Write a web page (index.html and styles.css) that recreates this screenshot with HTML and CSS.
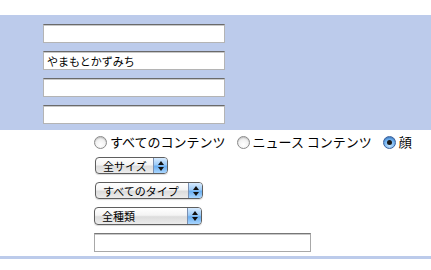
FILE: index.html
```html
<!DOCTYPE html>
<html lang="ja">
<head>
<meta charset="utf-8">
<link rel="stylesheet" href="styles.css">
</head>
<body>
<div class="band">
  <input class="field" type="text" value="">
  <input class="field" type="text" value="やまもとかずみち">
  <input class="field" type="text" value="">
  <input class="field" type="text" value="">
</div>
<div class="options">
  <div class="radios">
    <label class="radio"><span class="dot"></span><span class="rlabel">すべてのコンテンツ</span></label>
    <label class="radio"><span class="dot"></span><span class="rlabel">ニュース コンテンツ</span></label>
    <label class="radio"><span class="dot on"></span><span class="rlabel">顔</span></label>
  </div>
  <div class="popup w1"><span class="ptext">全サイズ</span><span class="parrow"><span class="up"></span><span class="down"></span></span></div>
  <div class="popup w2"><span class="ptext">すべてのタイプ</span><span class="parrow"><span class="up"></span><span class="down"></span></span></div>
  <div class="popup w3"><span class="ptext">全種類</span><span class="parrow"><span class="up"></span><span class="down"></span></span></div>
  <input class="field wide" type="text" value="">
</div>
<div class="rule"></div>
</body>
</html>
```
FILE: styles.css
```css
html, body {
  margin: 0;
  padding: 0;
  background: #ffffff;
  font-family: "Noto Sans CJK JP", "Liberation Sans", sans-serif;
  color: #000;
}
.band {
  margin-top: 15px;
  height: 115px;
  box-sizing: border-box;
  background: #bccbeb;
  padding: 9px 0 0 43px;
  display: flex;
  flex-direction: column;
  gap: 8px;
}
.field {
  display: block;
  width: 182px;
  height: 19px;
  box-sizing: border-box;
  margin: 0;
  padding: 0 0 0 3px;
  border: 1px solid #b4b4b4;
  border-top-color: #6a6a6a;
  box-shadow: inset 0 1px 0 #c8c8c8;
  background: #fff;
  font-family: "Noto Sans CJK JP", sans-serif;
  font-size: 11px;
  color: #000;
  outline: none;
}
.options {
  padding: 4px 0 0 94px;
  display: flex;
  flex-direction: column;
  align-items: flex-start;
}
.radios {
  display: flex;
  height: 16px;
  align-items: center;
  gap: 11px;
  margin-bottom: 7px;
}
.radio {
  display: flex;
  align-items: center;
  gap: 3px;
  font-size: 13px;
  line-height: 16px;
}
.dot {
  width: 11px;
  height: 11px;
  border-radius: 50%;
  border: 1px solid #8a8a8a;
  background: radial-gradient(circle at 50% 70%, #ffffff 0%, #f2f2f2 50%, #d6d6d6 100%);
  box-shadow: inset 0 1px 1px rgba(0,0,0,0.15);
  position: relative;
}
.dot.on {
  border-color: #3a5f9a;
  background: radial-gradient(circle at 50% 75%, #c9e6ff 0%, #6fb1f0 55%, #3e7fd0 100%);
}
.dot.on::after {
  content: "";
  position: absolute;
  left: 3px;
  top: 3px;
  width: 5px;
  height: 5px;
  border-radius: 50%;
  background: #1a1a1a;
}
.popup {
  display: flex;
  height: 18px;
  box-sizing: border-box;
  border: 1px solid #5e5e5e;
  border-radius: 4px;
  overflow: hidden;
  margin-bottom: 8px;
  margin-left: 1px;
  background: linear-gradient(#ffffff 0%, #f4f4f4 45%, #dcdcdc 55%, #ececec 100%);
  box-shadow: 0 1px 1px rgba(0,0,0,0.15);
}
.popup.w1 { width: 73px; height: 17px; }
.popup.w2 { width: 108px; height: 17px; }
.popup.w3 { width: 108px; margin-left: 0; }
.ptext {
  flex: 1;
  font-size: 11px;
  line-height: 16px;
  padding-left: 7px;
  white-space: nowrap;
}
.parrow {
  width: 13px;
  border-left: 1px solid #7a8fb0;
  background: linear-gradient(#d7ebff 0%, #9ccbf8 45%, #6aaef0 55%, #a9d6ff 100%);
  display: flex;
  flex-direction: column;
  align-items: center;
  justify-content: center;
  gap: 2px;
}
.up {
  width: 0;
  height: 0;
  border-left: 3px solid transparent;
  border-right: 3px solid transparent;
  border-bottom: 4px solid #111;
}
.down {
  width: 0;
  height: 0;
  border-left: 3px solid transparent;
  border-right: 3px solid transparent;
  border-top: 4px solid #111;
}
.field.wide {
  width: 217px;
  border-color: #a8a8a8;
  border-top-color: #777;
}
.rule {
  margin-top: 4px;
  height: 3px;
  background: #bccbeb;
}
```
